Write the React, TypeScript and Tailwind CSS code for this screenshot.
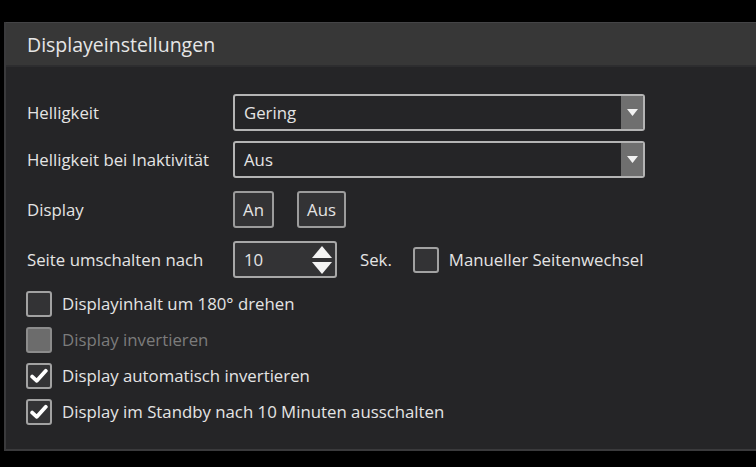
import { ReactNode } from "react";

function Caret() {
  return (
    <div className="flex h-full w-[22px] items-center justify-center bg-[#6f6f6f]">
      <svg width="11" height="7" viewBox="0 0 11 7">
        <path d="M0 0 H11 L5.5 7 Z" fill="#f2f2f2" />
      </svg>
    </div>
  );
}

function Select({ value }: { value: string }) {
  return (
    <div className="flex h-[37px] w-[412px] items-center overflow-hidden rounded-[3px] border-2 border-[#b4b4b4] bg-[#252527]">
      <span className="flex-1 pl-[9px]">{value}</span>
      <Caret />
    </div>
  );
}

function Box({ children, disabled }: { children?: ReactNode; disabled?: boolean }) {
  return (
    <div
      className={
        disabled
          ? "flex h-[26px] w-[26px] items-center justify-center rounded-[3px] border-2 border-[#8c8c8c] bg-[#6c6c6c]"
          : "flex h-[26px] w-[26px] items-center justify-center rounded-[3px] border-2 border-[#a2a2a2] bg-[#333335]"
      }
    >
      {children}
    </div>
  );
}

function Check() {
  return (
    <svg width="18" height="16" viewBox="0 0 18 16">
      <path
        d="M2.2 8.6 L6.8 12.8 L15.8 2.8"
        fill="none"
        stroke="#ffffff"
        strokeWidth="3.8"
        strokeLinecap="round"
        strokeLinejoin="round"
      />
    </svg>
  );
}

function CheckRow({ label, checked, disabled }: { label: string; checked?: boolean; disabled?: boolean }) {
  return (
    <div className="flex h-[26px] items-center gap-[10px]">
      <Box disabled={disabled}>{checked && <Check />}</Box>
      <span className={disabled ? "text-[#7c7c7c]" : ""}>{label}</span>
    </div>
  );
}

function Label({ children }: { children: ReactNode }) {
  return <div className="w-[206px] shrink-0">{children}</div>;
}

export default function App() {
  return (
    <div
      className="h-[467px] w-[756px] overflow-hidden bg-black pt-[22px] pl-[4px] text-[16.8px] text-[#e4e4e4]"
      style={{ fontFamily: '"Open Sans", "Noto Sans", sans-serif' }}
    >
      <div className="h-[429px] w-[800px] border-b-2 border-l-2 border-[#3a3a3c] bg-[#252527]">
        <div className="flex h-[45px] items-center border-t border-b-2 border-t-[#444446] border-b-[#2d2d2f] bg-[#373737] pt-[1px] pl-[21px] text-[19.5px] text-[#e6e6e6]">
          Displayeinstellungen
        </div>
        <div className="flex flex-col pt-[27px] pl-[21px]">
          <div className="flex items-center">
            <Label>Helligkeit</Label>
            <Select value="Gering" />
          </div>
          <div className="mt-[10px] flex items-center">
            <Label>Helligkeit bei Inaktivität</Label>
            <Select value="Aus" />
          </div>
          <div className="mt-[13px] flex items-center">
            <Label>Display</Label>
            <div className="flex gap-[23px]">
              <div className="flex h-[37px] w-[41px] items-center justify-center rounded-[3px] border-2 border-[#9c9c9c] bg-[#333335]">
                An
              </div>
              <div className="flex h-[37px] w-[49px] items-center justify-center rounded-[3px] border-2 border-[#9c9c9c] bg-[#333335]">
                Aus
              </div>
            </div>
          </div>
          <div className="mt-[13px] flex items-center">
            <Label>Seite umschalten nach</Label>
            <div className="flex h-[37px] w-[104px] items-center justify-between rounded-[3px] border-2 border-[#a8a8a8] bg-[#333335] pr-[2px] pl-[9px]">
              <span>10</span>
              <svg width="22" height="30" viewBox="0 0 22 30">
                <path d="M11 1 L21 13 H1 Z" fill="#f4f4f4" />
                <path d="M1 17 H21 L11 29 Z" fill="#f4f4f4" />
              </svg>
            </div>
            <span className="ml-[23px]">Sek.</span>
            <div className="ml-[21px]">
              <CheckRow label="Manueller Seitenwechsel" />
            </div>
          </div>
          <div className="-ml-[1px] mt-[13px] flex flex-col gap-[10px]">
            <CheckRow label="Displayinhalt um 180° drehen" />
            <CheckRow label="Display invertieren" disabled />
            <CheckRow label="Display automatisch invertieren" checked />
            <CheckRow label="Display im Standby nach 10 Minuten ausschalten" checked />
          </div>
        </div>
      </div>
    </div>
  );
}
